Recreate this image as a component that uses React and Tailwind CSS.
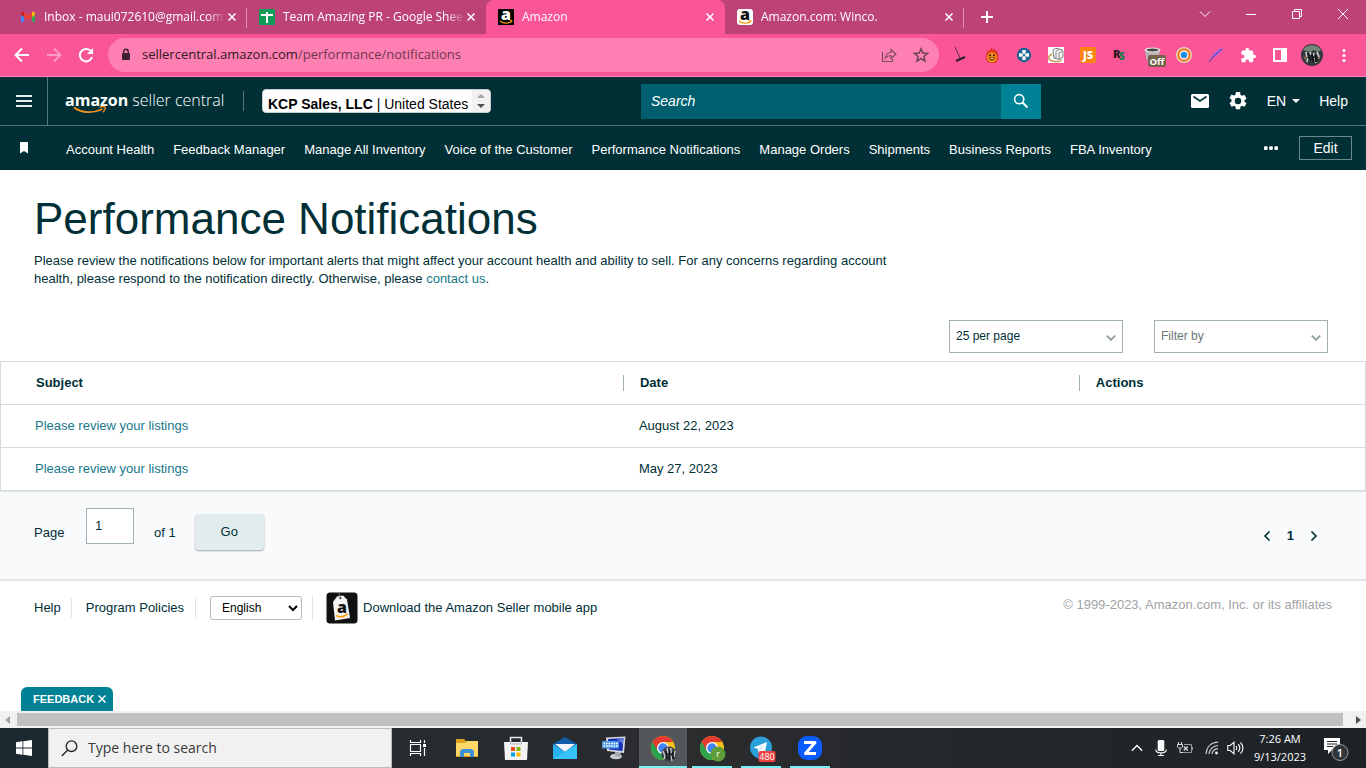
import React, { useState } from 'react';

const NAV_LINKS = [
  'Account Health',
  'Feedback Manager',
  'Manage All Inventory',
  'Voice of the Customer',
  'Performance Notifications',
  'Manage Orders',
  'Shipments',
  'Business Reports',
  'FBA Inventory',
];

const NOTIFICATIONS = [
  { id: 1, subject: 'Please review your listings', date: 'August 22, 2023' },
  { id: 2, subject: 'Please review your listings', date: 'May 27, 2023' },
];

/* ---------- favicons ---------- */

function GmailIcon() {
  return (
    <svg viewBox="0 0 16 16" className="w-4 h-4 shrink-0">
      <path d="M1 4v9h3V7z" fill="#4285f4" />
      <path d="M15 4v9h-3V7z" fill="#34a853" />
      <path d="M1 4.500C1 3 2.800 2.300 4 3.300V8L1 5.800z" fill="#c5221f" />
      <path d="M15 4.500C15 3 13.200 2.300 12 3.300V8l3-2.200z" fill="#fbbc04" />
      <path d="M4 3.300 8 6.300l4-3V8L8 11 4 8z" fill="#ea4335" />
    </svg>
  );
}

function SheetsIcon() {
  return (
    <svg viewBox="0 0 16 16" className="w-4 h-4 shrink-0">
      <rect width="16" height="16" rx="1" fill="#0f9d58" />
      <path d="M2 6h12M8 3v11" stroke="#fff" strokeWidth="2" />
    </svg>
  );
}

function AmazonIcon({ bg, fg, radius = 0 }) {
  return (
    <svg viewBox="0 0 16 16" className="w-4 h-4 shrink-0 overflow-visible">
      <rect width="16" height="16" rx={radius} fill={bg} />
      <text x="8" y="10.500" textAnchor="middle" fontFamily="Open Sans, sans-serif" fontWeight="800" fontSize="16" fill={fg}>a</text>
      <path d="M2 12c3.500 2.800 8.500 2.800 11.300.4" fill="none" stroke="#f90" strokeWidth="1.300" />
      <path d="M11.800 11.500l2.200-.1-.4 2.100" fill="none" stroke="#f90" strokeWidth="1" />
    </svg>
  );
}

/* ---------- browser chrome ---------- */

const TABS = [
  { title: 'Inbox - maui072610@gmail.com', icon: <GmailIcon /> },
  { title: 'Team Amazing PR - Google Shee', icon: <SheetsIcon /> },
  { title: 'Amazon', icon: <AmazonIcon bg="#000" fg="#fff" />, active: true },
  { title: 'Amazon.com: Winco.', icon: <AmazonIcon bg="#fff" fg="#111" radius={3} /> },
];

function CloseGlyph() {
  return (
    <svg viewBox="0 0 8 8" className="w-2 h-2" fill="none" stroke="currentColor" strokeWidth="1.500">
      <path d="M.5.5l7 7M7.500.5l-7 7" />
    </svg>
  );
}

function Tab({ tab, divider }) {
  return (
    <div className={`relative w-[239px] h-[34px] flex items-center pl-3 pr-[11px] text-white text-xs ${tab.active ? 'bg-[#fa5596] rounded-t-lg' : ''}`}>
      {tab.icon}
      <span className="ml-2 flex-1 overflow-hidden whitespace-nowrap [mask-image:linear-gradient(to_right,black_90%,transparent)]">
        {tab.title}
      </span>
      <button type="button" aria-label="Close tab" className="ml-[2px]"><CloseGlyph /></button>
      {divider && <span className="absolute right-0 top-2 h-5 w-px bg-[#e08fb3]" />}
    </div>
  );
}

function TabStrip() {
  return (
    <div className="flex bg-[#bd4278] h-[34px] pl-2">
      {TABS.map((tab, i) => <Tab key={tab.title} tab={tab} divider={i === 0 || i === 3} />)}
      <button type="button" aria-label="New tab" className="ml-[15px] w-4 self-center text-white">
        <svg viewBox="0 0 16 16" className="w-4 h-4" stroke="currentColor" strokeWidth="2"><path d="M8 2v12M2 8h12" /></svg>
      </button>
      <div className="ml-auto flex text-white">
        <button type="button" aria-label="Search tabs" className="w-[46px] h-7 flex items-center justify-center">
          <svg viewBox="0 0 12 12" className="w-3 h-3" fill="none" stroke="currentColor"><path d="M1 3.500l5 5 5-5" /></svg>
        </button>
        <button type="button" aria-label="Minimize" className="w-[46px] h-7 flex items-center justify-center">
          <svg viewBox="0 0 12 12" className="w-3 h-3" stroke="currentColor"><path d="M1 6.500h10" /></svg>
        </button>
        <button type="button" aria-label="Restore" className="w-[46px] h-7 flex items-center justify-center">
          <svg viewBox="0 0 12 12" className="w-3 h-3" fill="none" stroke="currentColor"><path d="M1.500 3.500h7v7h-7zM3.500 3.500v-2h7v7h-2" /></svg>
        </button>
        <button type="button" aria-label="Close" className="w-[46px] h-7 flex items-center justify-center">
          <svg viewBox="0 0 12 12" className="w-3 h-3" stroke="currentColor"><path d="M1 1l10 10M11 1L1 11" /></svg>
        </button>
      </div>
    </div>
  );
}

function Extensions() {
  return (
    <div className="flex items-center gap-4 ml-[13px] pr-[14px]">
      <svg viewBox="0 0 16 16" className="w-4 h-4" fill="none" stroke="#222">
        <path d="M3 0l5 11" stroke="#5a3044" />
        <path d="M4 14l9-4" strokeWidth="2" />
      </svg>
      <svg viewBox="0 0 16 16" className="w-4 h-4">
        <path d="M6.500 0c1.200 1 1.500 2.500 2.500 3l1-1.700.8 2.700 2-.5c-.3 1.500 1.700 3.500 1.700 6.500a6.300 6.300 0 0 1-12.600 0C1.900 7 3.500 6 3.500 3L5 4.600C5.500 3.500 7 2.500 6.500 0z" fill="#e0301a" />
        <circle cx="8" cy="10.200" r="5.200" fill="#f08a1c" />
        <path d="M4.800 10.600c1 3.600 5.400 3.600 6.400 0z" fill="#5b2508" />
        <path d="M5.600 11c1 1.500 3.800 1.500 4.800 0z" fill="#f7d35a" />
        <circle cx="6" cy="8.200" r="1" fill="#3b1a08" />
        <circle cx="10" cy="8.200" r="1" fill="#3b1a08" />
      </svg>
      <svg viewBox="0 0 16 16" className="w-4 h-4">
        <circle cx="8" cy="8" r="7.200" fill="#1a6594" />
        <path d="M6.300 3h3.400v3.300H13v3.400H9.700V13H6.300V9.700H3V6.300h3.300z" fill="#fff" />
        <path d="M7.300 7.300h1.400v1.400H7.300zM5.800 5.800l1 1M10.200 5.800l-1 1M5.800 10.200l1-1M10.200 10.200l-1-1" fill="#1a6594" stroke="#1a6594" />
      </svg>
      <svg viewBox="0 0 16 16" className="w-4 h-4">
        <path d="M0 0h16v16H0z" fill="#fff" />
        <path d="M5 4.500C5 2 7 1 9 1.500l4 1c2 .7 2 2 2 4v3.500l-4 2.500-5-1.500z" fill="#f4f4f4" stroke="#777" />
        <path d="M8 11V5.500C8 3.500 9.500 2.800 11 3.200M11 12V6l3-1.500" fill="none" stroke="#888" />
        <path d="M4 7C-1 9.500 0 13 5 14.300c4 .9 7.500 0 8.500-1.800" fill="none" stroke="#d09a56" strokeWidth="1.500" />
      </svg>
      <svg viewBox="0 0 16 16" className="w-4 h-4 overflow-visible">
        <rect width="16" height="16" rx="1.500" fill="#ff8410" />
        <text x="8" y="12" textAnchor="middle" fontFamily="Open Sans, sans-serif" fontWeight="800" fontSize="11" fill="#fff">JS</text>
      </svg>
      <svg viewBox="0 0 16 16" className="w-4 h-4 overflow-visible">
        <text x="1" y="11" fontFamily="Open Sans, sans-serif" fontWeight="800" fontSize="11" fill="#2a1420">R</text>
        <text x="7" y="13" fontFamily="Open Sans, sans-serif" fontWeight="800" fontSize="10" fill="#157a48">S</text>
      </svg>
      <svg viewBox="0 0 22 20" className="w-[22px] h-5 -mr-[6px] shrink-0 overflow-visible">
        <path d="M1 5h15l-1.500 10h-12z" fill="#b9b3b5" />
        <ellipse cx="8.500" cy="5" rx="8" ry="2.600" fill="#e5e2e2" />
        <ellipse cx="8.500" cy="5" rx="6" ry="1.500" fill="#4a4547" />
        <rect x="4" y="10" width="18" height="12" rx="2" fill="#75614b" />
        <text x="13" y="19.500" textAnchor="middle" fontFamily="Open Sans, sans-serif" fontWeight="700" fontSize="9.500" fill="#fff">Off</text>
      </svg>
      <svg viewBox="0 0 16 16" className="w-4 h-4">
        <circle cx="8" cy="8" r="8" fill="#e6d9bb" />
        <circle cx="8" cy="8" r="5.600" fill="#fff" stroke="#ef7c2b" strokeWidth="2.200" />
        <circle cx="8" cy="8" r="3.300" fill="#1d8fe1" />
      </svg>
      <svg viewBox="0 0 16 16" className="w-4 h-4">
        <path d="M1 15C3 8 8 3 15.500.5 14 3 14 4 12.500 5.500L10 6l1 1C9 9 6 10 4 11z" fill="#b26be6" />
        <path d="M1 15C5 9.500 9 5.500 14 2" stroke="#55309a" fill="none" />
      </svg>
      <svg viewBox="0 0 23 23" className="w-4 h-4" fill="#fff">
        <path d="M20.500 11H19V7c0-1.100-.9-2-2-2h-4V3.500C13 2.120 11.880 1 10.500 1S8 2.120 8 3.500V5H4c-1.100 0-1.990.9-1.990 2v3.800H3.500c1.490 0 2.700 1.210 2.700 2.700s-1.210 2.700-2.700 2.700H2V20c0 1.100.9 2 2 2h3.800v-1.500c0-1.490 1.210-2.700 2.700-2.700s2.700 1.210 2.700 2.700V22H17c1.100 0 2-.9 2-2v-4h1.500a2.500 2.500 0 0 0 0-5z" />
      </svg>
      <svg viewBox="0 0 16 16" className="w-4 h-4" fill="#fff">
        <path d="M1 1h14v14H1zM3 3v10h6V3z" fillRule="evenodd" />
      </svg>
      <svg viewBox="0 0 22 22" className="w-[22px] h-[22px] -mx-[3px] shrink-0">
        <circle cx="11" cy="11" r="11" fill="#34383a" />
        <path d="M2 6c3-6.500 15-6.500 18 0l-3 2-4-2-4 2-4-1z" fill="#76837d" />
        <path d="M5 8l1 5M9 8l1 3M13 9l-1 3M16 8l2 5M7 14l-1 4M14 14l1 5" stroke="#c8cfd3" strokeWidth="1.800" />
        <path d="M7 9l2 8M11 10l1 8M15 11v7" stroke="#15181a" strokeWidth="2" />
        <path d="M3 13l2 2M17 14h2" stroke="#8d6a55" strokeWidth="2" />
      </svg>
      <svg viewBox="0 0 16 16" className="w-4 h-4" fill="#fff">
        <circle cx="8" cy="3.500" r="1.500" />
        <circle cx="8" cy="8.500" r="1.500" />
        <circle cx="8" cy="13.500" r="1.500" />
      </svg>
    </div>
  );
}

function Toolbar() {
  return (
    <div className="flex items-center h-[43px] bg-[#fa5596] border-b border-[#fe8ab7] pl-[14px] text-white">
      <button type="button" aria-label="Back">
        <svg viewBox="0 0 16 16" className="w-4 h-4" fill="none" stroke="#fff" strokeWidth="2"><path d="M15 8H2M8 1.500L1.500 8 8 14.500" /></svg>
      </button>
      <button type="button" aria-label="Forward" className="ml-4">
        <svg viewBox="0 0 16 16" className="w-4 h-4" fill="none" stroke="#ff9cc4" strokeWidth="1.800"><path d="M1 8h13M8 1.500L14.500 8 8 14.500" /></svg>
      </button>
      <button type="button" aria-label="Reload" className="ml-4">
        <svg viewBox="0 0 16 16" className="w-4 h-4" fill="none" stroke="#fff" strokeWidth="2">
          <path d="M14 10A6.200 6.200 0 1 1 12.300 3.600" />
          <path d="M15 1v6H9z" fill="#fff" stroke="none" />
        </svg>
      </button>
      <div className="ml-[14px] flex-1 h-[34px] rounded-full bg-[#fe7fb1] flex items-center pl-3 pr-[10px]">
        <svg viewBox="0 0 12 14" className="w-3 h-[14px]">
          <rect x="2" y="5" width="8" height="7" rx="1" fill="#3d2230" />
          <path d="M3.800 6V3.500a2.200 2.200 0 0 1 4.400 0V6" fill="none" stroke="#3d2230" strokeWidth="1.400" />
        </svg>
        <p className="ml-[10px] flex-1 text-[13px] text-[#6f3650]">
          <span className="text-[#2e1a24]">sellercentral.amazon.com</span>/performance/notifications
        </p>
        <svg viewBox="0 0 16 16" className="w-4 h-4" fill="none" stroke="#7c4a61" strokeWidth="1.200">
          <path d="M1.500 5v9.500h10V12" />
          <path d="M4.500 11C5 7 7 5.500 10 5.500V2.500L15 7l-5 4.500V8.500c-2.500 0-4 .5-5.500 2.500z" />
        </svg>
        <svg viewBox="0 0 16 16" className="w-4 h-4 ml-4" fill="none" stroke="#6b4357" strokeWidth="1.500">
          <path d="M8 1.800l1.800 4.300 4.700.4-3.600 3 1.100 4.600-4-2.500-4 2.500 1.100-4.600-3.600-3 4.700-.4z" />
        </svg>
      </div>
      <Extensions />
    </div>
  );
}

/* ---------- seller central ---------- */

function Logo() {
  return (
    <a href="#home" className="relative flex items-center gap-1 pb-[2px] text-white font-['Open_Sans',sans-serif] text-base leading-[22px] whitespace-nowrap">
      <span className="font-bold">amazon</span>
      <span className="font-light">seller central</span>
      <svg viewBox="0 0 34 9" className="absolute left-2 top-[17px] w-[34px] h-[9px]" fill="none" stroke="#f79420">
        <path d="M1 1.500c8 6 19 6 28.500 1.500" strokeWidth="1.800" />
        <path d="M26.500 1.200c2-.8 5-.8 5.500 0s-.5 3.300-2 5" strokeWidth="1.400" />
      </svg>
    </a>
  );
}

function Header() {
  return (
    <header className="bg-[#002f36] text-white">
      <div className="flex items-stretch justify-between h-[49px] border-b border-[#53757a]">
        <div className="flex items-center">
          <button type="button" aria-label="Menu" className="w-12 self-stretch flex items-center justify-center border-r border-[#53757a]">
            <svg viewBox="0 0 16 12" className="w-4 h-3" stroke="#e6ecec" strokeWidth="2"><path d="M0 1h16M0 6h16M0 11h16" /></svg>
          </button>
          <div className="w-[178px] ml-[17px]"><Logo /></div>
          <span className="w-px h-5 bg-[#53757a]" />
          <button type="button" aria-haspopup="listbox" className="ml-[18px] flex h-6 rounded-sm bg-white border border-[#c5cccd] text-sm leading-7 text-black overflow-hidden">
            <span className="pl-[5px] pr-1 whitespace-nowrap"><b>KCP Sales, LLC</b> | United States</span>
            <svg viewBox="0 0 18 22" className="w-[18px] h-[22px] bg-[#f1f1f1]">
              <path d="M5 8h8L9 4z" fill="#a3a3a3" />
              <path d="M5 14h8l-4 4z" fill="#505050" />
            </svg>
          </button>
        </div>
        <form className="flex self-center h-[35px] w-[400px]" onSubmit={(e) => e.preventDefault()}>
          <input
            type="search"
            aria-label="Search"
            placeholder="Search"
            className="flex-1 min-w-0 bg-[#005f6f] px-[10px] text-sm italic text-white placeholder-white outline-none"
          />
          <button type="submit" aria-label="Submit search" className="w-10 bg-[#008296] flex items-center justify-center">
            <svg viewBox="0 0 16 16" className="w-4 h-4" fill="none" stroke="#fff" strokeWidth="1.600"><circle cx="6.200" cy="6.200" r="4.600" /><path d="M9.500 9.500l5 5" strokeWidth="2" /></svg>
          </button>
        </form>
        <div className="flex items-center pr-[18px] text-sm">
          <a href="#messages" aria-label="Messages">
            <svg viewBox="0 0 18 14" className="w-[18px] h-[14px]"><rect width="18" height="14" rx="1.500" fill="#fff" /><path d="M2.500 2.500L9 7l6.500-4.500" fill="none" stroke="#002f36" strokeWidth="1.600" /></svg>
          </a>
          <a href="#settings" aria-label="Settings" className="ml-5">
            <svg viewBox="2 2 20 20" className="w-[18px] h-[18px]" fill="#fff">
              <path d="M19.140 12.940c.04-.3.06-.61.06-.94s-.02-.64-.07-.94l2.030-1.580a.49.49 0 0 0 .12-.61l-1.920-3.320a.49.49 0 0 0-.59-.22l-2.390.96a7 7 0 0 0-1.620-.94l-.36-2.540A.48.48 0 0 0 13.920 2h-3.840a.48.48 0 0 0-.47.41l-.36 2.540a7.300 7.300 0 0 0-1.620.94l-2.390-.96a.48.48 0 0 0-.59.22L2.740 8.470a.48.48 0 0 0 .12.61l2.030 1.580c-.05.3-.09.63-.09.94s.02.64.07.94l-2.030 1.580a.49.49 0 0 0-.12.61l1.920 3.320c.12.22.37.29.59.22l2.390-.96c.5.38 1.030.7 1.620.94l.36 2.540c.05.24.24.41.48.41h3.840c.24 0 .44-.17.47-.41l.36-2.540a7 7 0 0 0 1.620-.94l2.390.96c.22.08.47 0 .59-.22l1.920-3.320a.48.48 0 0 0-.12-.61zM12 15.600a3.600 3.600 0 1 1 0-7.200 3.600 3.600 0 0 1 0 7.200z" />
            </svg>
          </a>
          <button type="button" className="ml-5 flex items-center gap-[6px]">
            EN
            <svg viewBox="0 0 8 4" className="w-2 h-1" fill="#fff"><path d="M0 0h8L4 4z" /></svg>
          </button>
          <a href="#help" className="ml-[19px]">Help</a>
        </div>
      </div>
      <nav className="flex items-center h-11 text-[13px] pb-px">
        <svg viewBox="0 0 10 12" className="w-[10px] h-3 ml-[19px]" fill="#fff"><path d="M1 0h8v11.500L5 9l-4 2.500z" /></svg>
        <ul className="flex gap-[19px] ml-[37px] pt-1 whitespace-nowrap">
          {NAV_LINKS.map((label) => (
            <li key={label}><a href="#nav">{label}</a></li>
          ))}
        </ul>
        <button type="button" aria-label="More" className="ml-auto">
          <svg viewBox="0 0 14 4" className="w-[14px] h-1" fill="#fff"><rect x="0" y=".3" width="3.600" height="3.600" rx="1" /><rect x="5.200" y=".3" width="3.600" height="3.600" rx="1" /><rect x="10.400" y=".3" width="3.600" height="3.600" rx="1" /></svg>
        </button>
        <button type="button" className="ml-[21px] mr-[14px] w-[53px] h-6 border border-[#6b878b] text-sm leading-5">Edit</button>
      </nav>
    </header>
  );
}

function FilterSelect({ label, options, muted }) {
  return (
    <label className="relative block">
      <span className="sr-only">{label}</span>
      <select className={`block appearance-none w-[174px] h-[33px] pl-[6px] pr-7 pb-px bg-white border border-[#a2b1b4] text-xs ${muted ? 'text-[#6c7778]' : 'text-[#002f36]'}`}>
        {options.map((o) => <option key={o}>{o}</option>)}
      </select>
      <svg viewBox="0 0 10 6" className="absolute right-[7px] top-[15px] w-[10px] h-[6px]" fill="none" stroke="#8c9c9f" strokeWidth="1.800"><path d="M.8.6L5 4.800 9.200.6" /></svg>
    </label>
  );
}

function NotificationsTable() {
  return (
    <table className="w-full table-fixed border border-[#d5dbdb] text-left">
      <thead>
        <tr className="h-[43px]">
          <th className="w-[45.600%] pl-[35px]">Subject</th>
          <th className="w-[33.400%]"><span className="block border-l border-[#a2b1b4] pl-4 leading-4">Date</span></th>
          <th><span className="block border-l border-[#a2b1b4] pl-4 leading-4">Actions</span></th>
        </tr>
      </thead>
      <tbody>
        {NOTIFICATIONS.map((n) => (
          <tr key={n.id} className="h-[43px] border-t border-[#d5dbdb]">
            <td className="pl-[34px]"><a href="#notification" className="text-[#17788a]">{n.subject}</a></td>
            <td className="pl-4">{n.date}</td>
            <td />
          </tr>
        ))}
      </tbody>
    </table>
  );
}

function Pager() {
  const [page, setPage] = useState('1');
  return (
    <div className="flex items-start h-[90px] px-[34px] bg-[#f9fafb] border-t border-b-2 border-[#dfe4e5]">
      <label htmlFor="page" className="mt-8 w-[52px]">Page</label>
      <input
        id="page"
        value={page}
        onChange={(e) => setPage(e.target.value)}
        className="mt-4 w-12 h-9 border border-[#a2b1b4] bg-white px-2 pb-[2px]"
      />
      <span className="mt-8 ml-5">of 1</span>
      <button type="button" className="mt-[22px] ml-[19px] w-[69px] h-9 rounded-sm bg-[#e3eced] shadow-[0_1px_2px_rgba(0,0,0,0.35)]">Go</button>
      <div className="ml-auto mt-[35px] mr-[14px] flex items-center gap-4 font-bold">
        <button type="button" aria-label="Previous page">
          <svg viewBox="0 0 8 10" className="w-2 h-[10px]" fill="none" stroke="#002f36" strokeWidth="1.600"><path d="M6.500.5L2 5l4.500 4.500" /></svg>
        </button>
        1
        <button type="button" aria-label="Next page">
          <svg viewBox="0 0 8 10" className="w-2 h-[10px]" fill="none" stroke="#002f36" strokeWidth="1.600"><path d="M1.500.5L6 5 1.500 9.500" /></svg>
        </button>
      </div>
    </div>
  );
}

function AppBadge() {
  return (
    <svg viewBox="0 0 32 32" className="w-8 h-8">
      <rect x=".5" y=".5" width="31" height="31" rx="3.500" fill="#111" />
      <path d="M13 1l1 4" stroke="#777" />
      <path d="M7 10l4-5.500 6-1 4 4 3 18.500-15 2.500z" fill="#f4f4f4" />
      <circle cx="14.300" cy="6" r="1.200" fill="#555" />
      <text x="16" y="21" textAnchor="middle" fontFamily="Open Sans, sans-serif" fontWeight="800" fontSize="16" fill="#111">a</text>
      <path d="M10 23.500c4 2 8.500 1.500 11.500-2" fill="none" stroke="#f90" strokeWidth="1.500" />
    </svg>
  );
}

function Footer() {
  return (
    <footer className="flex items-center px-[34px] pt-[11px]">
      <a href="#help">Help</a>
      <span className="ml-[10px] w-px h-5 bg-[#dfe4e5]" />
      <a href="#policies" className="ml-[14px]">Program Policies</a>
      <span className="ml-[11px] w-px h-5 bg-[#dfe4e5]" />
      <select aria-label="Language" className="ml-[14px] w-[92px] h-6 px-[7px] bg-white border border-[#b5b9ba] rounded-[3px] text-xs text-black">
        <option>English</option>
      </select>
      <span className="ml-[10px] w-px h-6 bg-[#dfe4e5]" />
      <a href="#app" className="ml-[13px] flex items-center gap-[5px]">
        <AppBadge />
        Download the Amazon Seller mobile app
      </a>
      <span className="ml-auto pb-[6px] text-[#a0a3a5]">© 1999-2023, Amazon.com, Inc. or its affiliates</span>
    </footer>
  );
}

function ScrollBar() {
  return (
    <div className="flex items-center h-[17px] px-[5px] gap-[7px] bg-[#f1f1f1]">
      <svg viewBox="0 0 5 8" className="w-[5px] h-2" fill="#a3a3a3"><path d="M5 0v8L0 4z" /></svg>
      <span className="flex-1 h-[13px] mr-[6px] bg-[#c1c1c1]" />
      <svg viewBox="0 0 5 8" className="w-[5px] h-2" fill="#505050"><path d="M0 0v8l5-4z" /></svg>
    </div>
  );
}

/* ---------- taskbar ---------- */

function ChromeLogo({ children }) {
  return (
    <svg viewBox="0 0 24 24" className="w-6 h-6 overflow-visible">
      <circle cx="12" cy="12" r="12" fill="#fbc116" />
      <path d="M12 12L1.600 6A12 12 0 0 0 12 24l5.200-9z" fill="#2ba24c" />
      <path d="M12 6h10.400A12 12 0 0 0 1.600 6l5.200 9z" fill="#e33b2e" />
      <circle cx="12" cy="12" r="6" fill="#fff" />
      <circle cx="12" cy="12" r="4.700" fill="#4285f4" />
      {children}
    </svg>
  );
}

const TASKS = [
  {
    name: 'Task View',
    icon: (
      <svg viewBox="0 0 18 18" className="w-[18px] h-[18px]" fill="none" stroke="#fff" strokeWidth="1.200">
        <path d="M1.500 1v2.500h10V1M1.500 17v-2.500h10V17M1.500 5.500h10v7h-10zM15.500 1v3M15.500 9v8" />
        <path d="M14 5h3v3h-3z" fill="#fff" stroke="none" />
      </svg>
    ),
  },
  {
    name: 'File Explorer',
    icon: (
      <svg viewBox="0 0 22 20" className="w-[22px] h-5">
        <path d="M0 1h8l2 2h12v16H0z" fill="#dfa020" />
        <path d="M0 5h9l2-2h11v15H0z" fill="#ffd766" />
        <path d="M4 19v-6l2-2h10l2 2v6h-4v-4H8v4z" fill="#3e91d6" />
      </svg>
    ),
  },
  {
    name: 'Store',
    icon: (
      <svg viewBox="0 0 24 24" className="w-6 h-6">
        <path d="M6.500 8V1.500h11V8" fill="none" stroke="#e8e8e8" strokeWidth="1.500" />
        <path d="M0 6h24l-1 18H1z" fill="#f3f3f3" />
        <path d="M6.500 6v2h11V6" fill="none" stroke="#b5b5b5" />
        <path d="M7 11h4v4H7z" fill="#f04e23" />
        <path d="M12.500 11h4v4h-4z" fill="#7fb900" />
        <path d="M7 16.500h4v4H7z" fill="#00a3ee" />
        <path d="M12.500 16.500h4v4h-4z" fill="#feb800" />
      </svg>
    ),
  },
  {
    name: 'Mail',
    icon: (
      <svg viewBox="0 0 24 22" className="w-6 h-[22px]">
        <path d="M0 7l12-7 12 7v8H0z" fill="#0f5ca8" />
        <path d="M2 7h20l-10 8z" fill="#f2f6f9" />
        <path d="M0 7l12 8 12-8v15H0z" fill="#2ab0ee" />
        <path d="M0 22L24 7v15z" fill="#35c3f7" />
      </svg>
    ),
  },
  {
    name: 'Remote keyboard',
    icon: (
      <svg viewBox="0 0 24 24" className="w-6 h-6">
        <ellipse cx="14" cy="20.500" rx="6" ry="2.800" fill="#c9ccd0" />
        <path d="M13 15l6 1-1 5-5-1z" fill="#a4a8ad" />
        <path d="M4 1.500L23.500.5 22 17 5 15z" fill="#d5d8dd" />
        <path d="M6 3l15.500-1L20.500 15 7 13.500z" fill="#1530b8" />
        <path d="M14 2.500l7.500-.5-.7 6z" fill="#5d78dd" />
        <rect x="0" y="5" width="17" height="7.500" rx="1" fill="#4d9ae6" />
        <path d="M1.500 7.500h14M1.500 10h14" stroke="#fff" strokeWidth="1.300" strokeDasharray="1.600 .9" />
      </svg>
    ),
  },
  {
    name: 'Chrome',
    state: 'focused',
    icon: (
      <ChromeLogo>
        <circle cx="18" cy="18" r="7.500" fill="#3d4145" />
        <path d="M12 15l2 5M16 12l1 5M20 12v5M24 15l-1 6M14 20l-1 3M20 20l1 5" stroke="#c5c9cc" strokeWidth="1.500" />
        <path d="M15 15l1 8M18.500 14v10M22 16v7" stroke="#121416" strokeWidth="1.500" />
      </ChromeLogo>
    ),
  },
  {
    name: 'Chrome work profile',
    state: 'open',
    icon: (
      <ChromeLogo>
        <circle cx="18" cy="18" r="7.500" fill="#5f9e38" />
        <text x="18" y="21" textAnchor="middle" fontFamily="Open Sans, sans-serif" fontSize="9" fill="#fff">r</text>
      </ChromeLogo>
    ),
  },
  {
    name: 'Telegram',
    state: 'open',
    icon: (
      <svg viewBox="0 0 24 24" className="w-6 h-6 overflow-visible">
        <circle cx="12" cy="11.500" r="11" fill="#2a9fd9" />
        <path d="M4.500 11.500L18 6l-2.500 12-4-3-2 2-.5-4z" fill="#fff" />
        <path d="M9.500 13l6-4.500-4.500 5.500z" fill="#b5dbf0" />
        <rect x="9.500" y="15" width="17" height="11" rx="2" fill="#ee3f3f" />
        <text x="18" y="24" textAnchor="middle" fontFamily="Open Sans, sans-serif" fontSize="9" fill="#fff">480</text>
      </svg>
    ),
  },
  {
    name: 'Zoom',
    state: 'open',
    icon: (
      <svg viewBox="0 0 24 24" className="w-6 h-6">
        <rect width="24" height="24" rx="9" fill="#0b5cff" />
        <path d="M6 6.500h11L7.500 17.500H18" fill="none" stroke="#fff" strokeWidth="3" strokeLinejoin="round" />
      </svg>
    ),
  },
];

function Taskbar() {
  return (
    <div className="flex h-10 bg-linear-to-r from-[#1b2a31] via-[#2b2c2e] to-[#1c2226] text-white">
      <button type="button" aria-label="Start" className="w-12 flex items-center justify-center">
        <svg viewBox="0 0 16 16" className="w-4 h-4" fill="#fff"><path d="M0 2.200l6.500-.9v6.200H0zM7.300 1.200L16 0v7.500H7.300zM0 8.400h6.500v6.300L0 13.800zM7.300 8.400H16V16l-8.700-1.200z" /></svg>
      </button>
      <label className="w-[344px] bg-[#f1f1f1] border border-[#bcbcbc] flex items-center pl-3 text-[#333]">
        <svg viewBox="0 0 17 17" className="w-[17px] h-[17px]" fill="none" stroke="#222" strokeWidth="1.300"><circle cx="10.500" cy="6.200" r="5.300" /><path d="M6.800 10L.8 16" /></svg>
        <input type="text" aria-label="Type here to search" placeholder="Type here to search" className="ml-[10px] flex-1 min-w-0 bg-transparent text-sm placeholder-[#3a3a3a] outline-none" />
      </label>
      <div className="flex gap-px ml-[2px]">
        {TASKS.map((task) => (
          <button
            key={task.name}
            type="button"
            aria-label={task.name}
            className={`relative w-12 flex items-center justify-center ${task.state === 'focused' ? 'bg-[#53575a]' : ''}`}
          >
            {task.icon}
            {task.state && (
              <span className={`absolute bottom-0 h-[2px] bg-[#76f0f3] ${task.state === 'focused' ? 'inset-x-0' : 'inset-x-1'}`} />
            )}
          </button>
        ))}
      </div>
      <div className="ml-auto flex items-center text-[11px]">
        <svg viewBox="0 0 12 8" className="w-3 h-2" fill="none" stroke="#fff" strokeWidth="1.300"><path d="M.8 6.800L6 1.500l5.200 5.300" /></svg>
        <svg viewBox="0 0 12 16" className="w-3 h-4 ml-3">
          <rect x="2.700" y="0" width="6.600" height="11" rx="1.500" fill="#fff" />
          <path d="M.8 9.500c0 4.500 10.500 4.500 10.500 0M6 13v2.500M3 15.500h6" fill="none" stroke="#fff" strokeWidth="1.100" />
        </svg>
        <svg viewBox="0 0 16 12" className="w-4 h-3 ml-[10px]" fill="none" stroke="#ddd">
          <path d="M1.500 0v2M4.500 0v2M.5 2.500h5V5C5 6.500 1 6.500.5 5zM3 6.500v4h3" />
          <path d="M7 2.500h7.500v8H6M15.500 5v3" stroke="#999" />
          <path d="M6.800 4.500l4 4M10.800 4.500l-4 4" strokeWidth="1.300" />
        </svg>
        <svg viewBox="0 0 14 14" className="w-[14px] h-[14px] ml-3" fill="none" stroke="#ccc" strokeWidth="1.200">
          <path d="M1 13C1.500 6 6 1.500 13 1.200M4 13c.5-4.500 4-8.300 9-8.500M7 13c.5-3 2.500-5 6-5.300" />
          <circle cx="11.500" cy="12" r="1.400" fill="#fff" stroke="none" />
        </svg>
        <svg viewBox="0 0 17 14" className="w-[17px] h-[14px] ml-2" fill="none" stroke="#fff" strokeWidth="1.100">
          <path d="M.8 4.500h2.500L7 1.200v11.600L3.300 9.500H.8z" />
          <path d="M9 5c1 1.300 1 2.700 0 4M11.200 3.200c2 2.300 2 5.300 0 7.600M13.500 1.300c3 3.500 3 7.900 0 11.400" />
        </svg>
        <div className="ml-2 w-14 text-center leading-[18px] whitespace-nowrap">
          <p>7:26 AM</p>
          <p>9/13/2023</p>
        </div>
        <svg viewBox="0 0 26 26" className="w-[26px] h-[26px] ml-4 mr-4">
          <path d="M0 3h16v12H8l-4 4v-4H0z" fill="#fff" />
          <path d="M3 6.500h10M3 9h10M3 11.500h6" stroke="#222" />
          <circle cx="16" cy="17.500" r="8" fill="#333639" stroke="#999" />
          <text x="16" y="21.500" textAnchor="middle" fontFamily="Open Sans, sans-serif" fontWeight="600" fontSize="11" fill="#fff">1</text>
        </svg>
      </div>
    </div>
  );
}

export default function App() {
  const [feedbackOpen, setFeedbackOpen] = useState(true);

  return (
    <div className="min-h-screen flex flex-col bg-white">
      <div className="font-['Open_Sans',sans-serif]">
        <TabStrip />
        <Toolbar />
      </div>

      <div className="flex-1 flex flex-col font-['Liberation_Sans',sans-serif] text-[13px] leading-[18px] text-[#002f36]">
        <Header />
        <main>
          <div className="px-[34px] pt-6">
            <h1 className="text-[44px] leading-[50px]">Performance Notifications</h1>
            <p className="mt-2 max-w-[870px]">
              Please review the notifications below for important alerts that might affect your account health and ability to sell. For any concerns regarding account health, please respond to the notification directly. Otherwise, please <a href="#contact" className="text-[#17788a]">contact us</a>.
            </p>
          </div>
          <div className="flex justify-end gap-[31px] mt-8 mb-2 pr-[38px]">
            <FilterSelect label="Results per page" options={['25 per page', '50 per page', '100 per page']} />
            <FilterSelect label="Filter" options={['Filter by']} muted />
          </div>
          <NotificationsTable />
          <Pager />
        </main>
        <Footer />

        {feedbackOpen && (
          <button
            type="button"
            onClick={() => setFeedbackOpen(false)}
            className="mt-auto ml-[21px] self-start h-6 pl-3 pr-[7px] flex items-center gap-1 rounded-t-md bg-[#008296] text-[11px] font-bold text-white"
          >
            FEEDBACK <CloseGlyph />
          </button>
        )}
      </div>

      <ScrollBar />
      <div className="font-['Open_Sans',sans-serif]">
        <Taskbar />
      </div>
    </div>
  );
}
